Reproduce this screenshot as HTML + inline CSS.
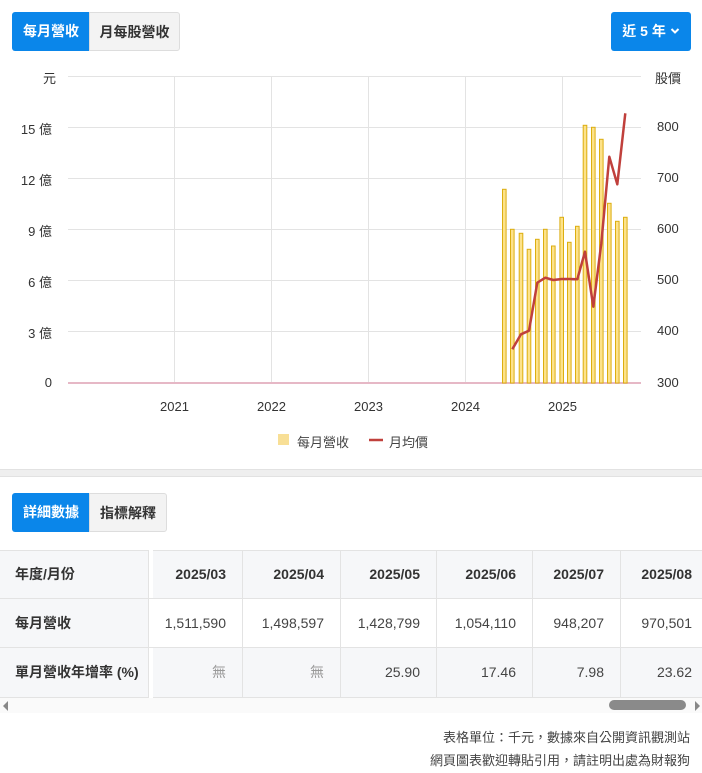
<!DOCTYPE html>
<html><head><meta charset="utf-8"><style>
*{margin:0;padding:0;box-sizing:border-box}
body{width:702px;height:773px;background:#fff;font-family:"Liberation Sans","Noto Sans CJK TC",sans-serif;position:relative;overflow:hidden;color:#333}
.a{position:absolute}
.btn{position:absolute;top:12px;height:39px;font-size:14px;font-weight:bold;line-height:39px;text-align:center}
.blue{background:#0a86ea;color:#fff}
.gray{background:#f3f3f3;color:#333;border:1px solid #ddd}
.ax{position:absolute;font-size:13px;color:#333}
.cell{position:absolute;font-size:14px;line-height:48px;padding-right:16px;text-align:right}
</style></head><body>
<div class="btn blue" style="left:12px;width:78px;border-radius:3px 0 0 3px">每月營收</div>
<div class="btn gray" style="left:89px;width:91px;border-radius:0 3px 3px 0">月每股營收</div>
<div class="btn blue" style="left:611px;width:80px;border-radius:3px">近 5 年 <svg width="10" height="8" viewBox="0 0 10 8" style="vertical-align:1px"><path d="M1.5 2 L5 5.5 L8.5 2" fill="none" stroke="#fff" stroke-width="2"/></svg></div>
<svg class="a" style="left:0;top:0" width="702" height="470">
<g stroke="#e3e3e3" stroke-width="1">
<line x1="68" x2="641" y1="76.5" y2="76.5"/><line x1="68" x2="641" y1="127.5" y2="127.5"/><line x1="68" x2="641" y1="178.5" y2="178.5"/><line x1="68" x2="641" y1="229.5" y2="229.5"/><line x1="68" x2="641" y1="280.5" y2="280.5"/><line x1="68" x2="641" y1="331.5" y2="331.5"/>
<line x1="174.5" x2="174.5" y1="76" y2="383"/><line x1="271.5" x2="271.5" y1="76" y2="383"/><line x1="368.5" x2="368.5" y1="76" y2="383"/><line x1="465.5" x2="465.5" y1="76" y2="383"/><line x1="562.5" x2="562.5" y1="76" y2="383"/>
</g>
<line x1="68" x2="641" y1="383" y2="383" stroke="#e6b8c6" stroke-width="2"/>
<g fill="#fde28a" stroke="#dcae10" stroke-width="1">
<rect x="502.5" y="189.3" width="3.6" height="193.7"/><rect x="510.5" y="229.3" width="3.6" height="153.7"/><rect x="519.2" y="233.3" width="3.6" height="149.7"/><rect x="527.2" y="249.3" width="3.6" height="133.7"/><rect x="535.5" y="239.3" width="3.6" height="143.7"/><rect x="543.5" y="229.3" width="3.6" height="153.7"/><rect x="551.5" y="246" width="3.6" height="137"/><rect x="559.9" y="217.3" width="3.6" height="165.7"/><rect x="567.5" y="242.3" width="3.6" height="140.7"/><rect x="575.5" y="226.3" width="3.6" height="156.7"/><rect x="583.2" y="125.3" width="3.6" height="257.7"/><rect x="591.5" y="127.3" width="3.6" height="255.7"/><rect x="599.5" y="139.3" width="3.6" height="243.7"/><rect x="607.5" y="203.3" width="3.6" height="179.7"/><rect x="615.5" y="221.3" width="3.6" height="161.7"/><rect x="623.5" y="217.3" width="3.6" height="165.7"/>
</g>
<polyline fill="none" stroke="#c0403c" stroke-width="2.5" stroke-linejoin="round" points="512.3,349.3 521,334.3 529,330.7 537.3,282.7 545.3,277.7 553.3,280 561.7,279 569.3,279 577.3,279.3 585,251.7 593.3,306.7 601.3,243.3 609.3,156.7 617.3,184.3 625.3,113.3"/>
<rect x="278" y="434" width="11" height="11" fill="#f8df96"/>
<line x1="369" x2="383" y1="440" y2="440" stroke="#c0403c" stroke-width="2.5"/>
</svg>
<div class="ax" style="left:43px;top:68px">元</div>
<div class="ax" style="left:655px;top:68px">股價</div>
<div class="ax" style="right:650px;top:119px">15 億</div>
<div class="ax" style="right:650px;top:170px">12 億</div>
<div class="ax" style="right:650px;top:221px">9 億</div>
<div class="ax" style="right:650px;top:272px">6 億</div>
<div class="ax" style="right:650px;top:323px">3 億</div>
<div class="ax" style="right:650px;top:375px">0</div>
<div class="ax" style="left:657px;top:119px">800</div>
<div class="ax" style="left:657px;top:170px">700</div>
<div class="ax" style="left:657px;top:221px">600</div>
<div class="ax" style="left:657px;top:272px">500</div>
<div class="ax" style="left:657px;top:323px">400</div>
<div class="ax" style="left:657px;top:375px">300</div>
<div class="ax" style="left:160px;top:399px">2021</div>
<div class="ax" style="left:257px;top:399px">2022</div>
<div class="ax" style="left:354px;top:399px">2023</div>
<div class="ax" style="left:451px;top:399px">2024</div>
<div class="ax" style="left:548px;top:399px">2025</div>
<div class="ax" style="left:297px;top:432px;color:#444">每月營收</div>
<div class="ax" style="left:389px;top:432px;color:#444">月均價</div>
<div class="a" style="left:0;top:469px;width:702px;height:8px;background:#efefef;border-top:1px solid #e2e2e2;border-bottom:1px solid #e2e2e2"></div>
<div class="btn blue" style="top:493px;left:12px;width:78px;border-radius:3px 0 0 3px">詳細數據</div>
<div class="btn gray" style="top:493px;left:89px;width:78px;border-radius:0 3px 3px 0">指標解釋</div>
<div class="a" style="left:0;top:550px;width:149px;height:148px;background:#f6f7f9;border:1px solid #e3e3e3;border-left:none"></div>
<div class="a" style="left:153px;top:550px;width:549px;height:148px;border-top:1px solid #e3e3e3;border-bottom:1px solid #e3e3e3"></div>
<div class="a" style="left:153px;top:551px;width:549px;height:48px;background:#f6f7f9"></div>
<div class="a" style="left:153px;top:648px;width:549px;height:49px;background:#f6f7f9"></div>
<div class="a" style="left:0;top:598px;width:702px;height:1px;background:#e3e3e3"></div>
<div class="a" style="left:0;top:647px;width:702px;height:1px;background:#e3e3e3"></div>
<div class="a" style="left:242px;top:550px;width:1px;height:148px;background:#e3e3e3"></div>
<div class="a" style="left:340px;top:550px;width:1px;height:148px;background:#e3e3e3"></div>
<div class="a" style="left:436px;top:550px;width:1px;height:148px;background:#e3e3e3"></div>
<div class="a" style="left:532px;top:550px;width:1px;height:148px;background:#e3e3e3"></div>
<div class="a" style="left:620px;top:550px;width:1px;height:148px;background:#e3e3e3"></div>
<div class="cell" style="left:15px;top:550px;text-align:left;font-weight:bold">年度/月份</div>
<div class="cell" style="left:15px;top:599px;text-align:left;font-weight:bold">每月營收</div>
<div class="cell" style="left:15px;top:648px;text-align:left;font-weight:bold">單月營收年增率 (%)</div>
<div class="cell" style="left:153px;width:89px;top:550px;font-weight:bold">2025/03</div>
<div class="cell" style="left:242px;width:98px;top:550px;font-weight:bold">2025/04</div>
<div class="cell" style="left:340px;width:96px;top:550px;font-weight:bold">2025/05</div>
<div class="cell" style="left:436px;width:96px;top:550px;font-weight:bold">2025/06</div>
<div class="cell" style="left:532px;width:88px;top:550px;font-weight:bold">2025/07</div>
<div class="cell" style="left:620px;width:82px;top:550px;font-weight:bold;padding-right:10px">2025/08</div>
<div class="cell" style="left:153px;width:89px;top:599px;color:#444">1,511,590</div>
<div class="cell" style="left:242px;width:98px;top:599px;color:#444">1,498,597</div>
<div class="cell" style="left:340px;width:96px;top:599px;color:#444">1,428,799</div>
<div class="cell" style="left:436px;width:96px;top:599px;color:#444">1,054,110</div>
<div class="cell" style="left:532px;width:88px;top:599px;color:#444">948,207</div>
<div class="cell" style="left:620px;width:82px;top:599px;color:#444;padding-right:10px">970,501</div>
<div class="cell" style="left:153px;width:89px;top:648px;color:#999">無</div>
<div class="cell" style="left:242px;width:98px;top:648px;color:#999">無</div>
<div class="cell" style="left:340px;width:96px;top:648px;color:#444">25.90</div>
<div class="cell" style="left:436px;width:96px;top:648px;color:#444">17.46</div>
<div class="cell" style="left:532px;width:88px;top:648px;color:#444">7.98</div>
<div class="cell" style="left:620px;width:82px;top:648px;color:#444;padding-right:10px">23.62</div>
<div class="a" style="left:0;top:698px;width:702px;height:15px;background:#fafafa"></div>
<div class="a" style="left:3px;top:701px;width:0;height:0;border-top:5px solid transparent;border-bottom:5px solid transparent;border-right:5px solid #888"></div>
<div class="a" style="left:695px;top:701px;width:0;height:0;border-top:5px solid transparent;border-bottom:5px solid transparent;border-left:5px solid #888"></div>
<div class="a" style="left:609px;top:700px;width:77px;height:10px;border-radius:5px;background:#8a8a8a"></div>
<div class="a" style="right:12px;top:727px;font-size:13px;color:#444">表格單位：千元，數據來自公開資訊觀測站</div>
<div class="a" style="right:12px;top:750px;font-size:13px;color:#444">網頁圖表歡迎轉貼引用，請註明出處為財報狗</div>
</body></html>
